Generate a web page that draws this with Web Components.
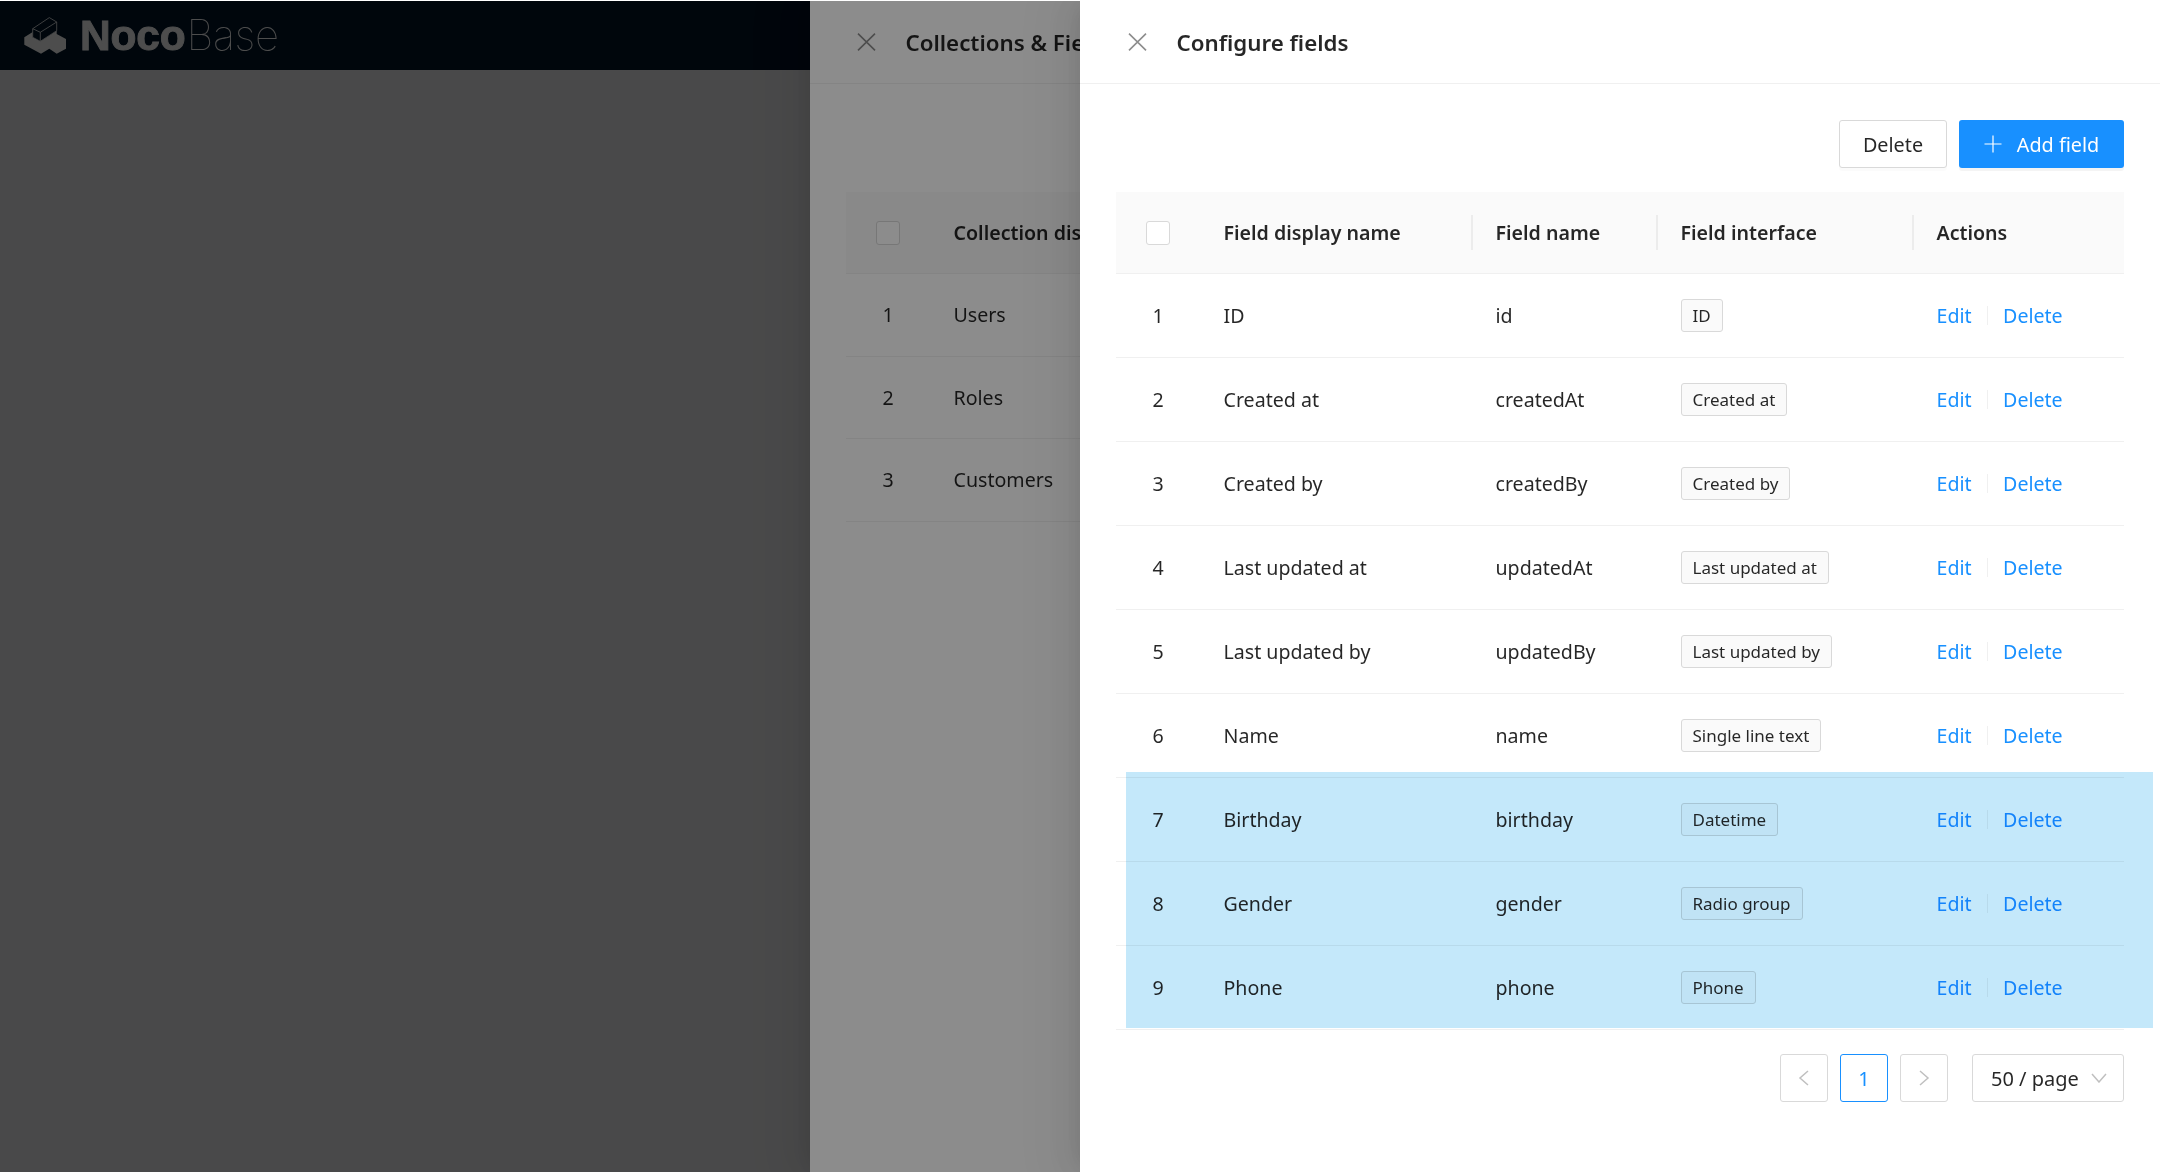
<!DOCTYPE html>
<html lang="en"><head><meta charset="utf-8"><title>NocoBase</title>
<style>
html,body{margin:0;height:100%;overflow:hidden}
body{font-family:"Noto Sans","Open Sans",sans-serif;font-size:19.6px;color:rgba(0,0,0,.85);background:#f5f5f6}
</style></head><body>
<nb-app>
  <nb-topbar slot="top"></nb-topbar>
  <nb-drawer slot="d1" class="mid" heading="Collections &amp; Fields">
    <nb-table kind="collections"></nb-table>
  </nb-drawer>
  <nb-drawer slot="d2" class="front" heading="Configure fields">
    <nb-toolbar></nb-toolbar>
    <nb-table kind="fields"></nb-table>
    <nb-pagination></nb-pagination>
  </nb-drawer>
</nb-app>
<script>
const X_ICON='<svg viewBox="0 0 19 18" width="19" height="18" fill="none" stroke="currentColor" stroke-width="1.6"><path d="M1 .6 18 17.4M18 .6 1 17.4"/></svg>';
class NbApp extends HTMLElement{constructor(){super();this.attachShadow({mode:'open'}).innerHTML=`<style>
:host{display:block;position:relative;width:2160px;height:1172px;overflow:hidden;background:#f5f5f6;border-top:1px solid #fff;box-sizing:border-box}
.mask{position:absolute;inset:0;background:rgba(0,0,0,.45)}
.d{position:absolute;top:0;bottom:0}
.d1{left:810px;right:0}.d2{left:1080px;right:0}
.line{position:absolute;left:0;right:0;top:-1px;height:1px;background:#c8c8c8}
</style><slot name="top"></slot><div class="mask"></div><div class="d d1"><slot name="d1"></slot></div><div class="mask"></div><div class="d d2"><slot name="d2"></slot></div><div class="line"></div>`}}
class NbTopbar extends HTMLElement{constructor(){super();this.attachShadow({mode:'open'}).innerHTML=`<style>
:host{display:flex;align-items:center;height:69px;background:#001529;padding-left:23px;gap:13px;color:#fff}
.t{display:flex;align-items:baseline;font-family:"Liberation Sans",sans-serif;font-size:42.5px;line-height:1}
b{font-weight:700;-webkit-text-stroke:.9px #fff;letter-spacing:-.2px}
span{font-family:Inter,"Liberation Sans",sans-serif;font-weight:100;font-size:42px;margin-left:1px;letter-spacing:-.4px}
svg{display:block}
</style><svg width="44" height="38" viewBox="0 0 44 38"><path fill="#fff" d="M1.3 20.3 9.7 15V20.3L17.3 24.3 33.7 13.7V17L43 22V31.7L33.7 36.7 26.3 31.7 18 36.7 1.3 27.7Z"/><path fill="#001529" stroke="#fff" stroke-width=".8" stroke-linejoin="round" d="M9.7 11.7 26.3.6 33.7 5V13.7L17.3 24.3 9.7 20.3Z"/><path fill="none" stroke="#fff" stroke-width=".8" d="M9.7 11.7 17.3 15.3 33.7 5M17.3 15.3V24.3"/></svg><div class="t"><b>Noco</b><span>Base</span></div>`}}
class NbDrawer extends HTMLElement{constructor(){super();this.attachShadow({mode:'open'}).innerHTML=`<style>
:host{display:flex;flex-direction:column;height:100%;background:#fff;box-shadow:-6px 0 16px -8px rgba(0,0,0,.08),-9px 0 28px rgba(0,0,0,.05),-12px 0 48px 16px rgba(0,0,0,.03)}
header{display:flex;align-items:center;height:83px;box-sizing:border-box;border-bottom:1px solid #f0f0f0;padding-left:var(--hp,48px);gap:29.5px;flex:none}
.x{display:flex;color:rgba(0,0,0,.45)}
h1{margin:0;padding-top:1px;font-size:22.3px;font-weight:600;line-height:30px;white-space:nowrap}
main{padding:36px var(--bp,36px) 0;display:flex;flex-direction:column}
</style><header><span class="x">${X_ICON}</span><h1></h1></header><main><slot></slot></main>`}
connectedCallback(){this.shadowRoot.querySelector('h1').textContent=this.getAttribute('heading');
 if(this.classList.contains('mid')){this.style.setProperty('--hp','47px');this.shadowRoot.querySelector('main').style.paddingTop='108px';}}}
class NbToolbar extends HTMLElement{constructor(){super();this.attachShadow({mode:'open'}).innerHTML=`<style>
:host{display:flex;justify-content:flex-end;gap:12px;height:48px;margin-bottom:24px}
button{font:inherit;font-size:19.8px;height:48px;border-radius:3px;box-sizing:border-box;display:flex;align-items:center;justify-content:center;padding:0;cursor:pointer}
.d{width:108px;background:#fff;border:1.5px solid #d9d9d9;color:rgba(0,0,0,.85);box-shadow:0 3px 0 rgba(0,0,0,.015)}
.p{width:165px;background:#1890ff;border:0;color:#fff;gap:15px;box-shadow:0 3px 0 rgba(0,0,0,.045)}
</style><button class="d">Delete</button><button class="p"><svg width="18" height="18" viewBox="0 0 18 18" stroke="#fff" stroke-width="1.2"><path d="M9 .5V17.5M.5 9H17.5"/></svg>Add field</button>`}}
class NbTag extends HTMLElement{constructor(){super();this.attachShadow({mode:'open'}).innerHTML=`<style>
:host{display:inline-flex;align-items:center;height:33px;box-sizing:border-box;padding:0 11px;border:1.5px solid #d9d9d9;border-radius:3px;background:#fafafa;font-size:17px;line-height:1;white-space:nowrap}
</style><slot></slot>`}}
class NbTable extends HTMLElement{constructor(){super();this.attachShadow({mode:'open'})}
connectedCallback(){const k=this.getAttribute('kind');
 const css=`<style>
:host{display:block;position:relative}
.r{display:grid;grid-template-columns:var(--c);height:84px;box-sizing:border-box;border-bottom:1.5px solid #f0f0f0;align-items:center;white-space:nowrap}
.r.m{height:82.5px}
.r.h{height:82px;background:#fafafa;font-weight:600;position:relative}
.c{padding-left:23.5px;position:relative;min-width:0}
.n{padding-left:0;text-align:center}
.h .c.s::before{content:"";position:absolute;left:-1px;top:-4px;height:35px;width:1.5px;background:#ececec}
.cb{display:block;width:24px;height:24px;margin:auto;box-sizing:border-box;border:1.5px solid #d9d9d9;border-radius:3px;background:#fff}
.a{display:flex;align-items:center;color:#1890ff}
.a i{display:block;width:1.5px;height:19px;background:#f0f0f0;margin:0 15px}
.hl{position:absolute;left:10px;width:1027px;top:580px;height:256px;background:#c4e8fa;mix-blend-mode:multiply;pointer-events:none}
</style>`;
 let rows='';
 if(k==='fields'){
  this.style.setProperty('--c','84px 272px 185px 256px 211px');
  const d=[['ID','id','ID'],['Created at','createdAt','Created at'],['Created by','createdBy','Created by'],['Last updated at','updatedAt','Last updated at'],['Last updated by','updatedBy','Last updated by'],['Name','name','Single line text'],['Birthday','birthday','Datetime'],['Gender','gender','Radio group'],['Phone','phone','Phone']];
  rows=`<div class="r h"><div class="n"><span class="cb"></span></div><div class="c">Field display name</div><div class="c s">Field name</div><div class="c s">Field interface</div><div class="c s">Actions</div></div>`+
  d.map((x,i)=>`<div class="r"><div class="n">${i+1}</div><div class="c">${x[0]}</div><div class="c">${x[1]}</div><div class="c"><nb-tag>${x[2]}</nb-tag></div><div class="c a">Edit<i></i>Delete</div></div>`).join('')+`<div class="hl"></div>`;
 }else{
  this.style.setProperty('--c','84px 400px');
  rows=`<div class="r h"><div class="n"><span class="cb"></span></div><div class="c">Collection display name</div></div>`+
  ['Users','Roles','Customers'].map((x,i)=>`<div class="r m"><div class="n">${i+1}</div><div class="c">${x}</div></div>`).join('');
 }
 this.shadowRoot.innerHTML=css+rows;}}
class NbPagination extends HTMLElement{constructor(){super();this.attachShadow({mode:'open'}).innerHTML=`<style>
:host{display:flex;justify-content:flex-end;gap:12px;margin-top:24px;height:48px;font-size:20px}
div{box-sizing:border-box;height:48px;width:48px;border:1.5px solid #d9d9d9;border-radius:3px;display:flex;align-items:center;justify-content:center;color:rgba(0,0,0,.25);background:#fff}
.on{border-color:#1890ff;color:#1890ff}
.sel{width:152px;margin-left:12px;color:rgba(0,0,0,.85);justify-content:flex-start;padding-left:18px;gap:12px}
svg{display:block}
</style><div><svg width="12" height="18" viewBox="0 0 12 18" fill="none" stroke="currentColor" stroke-width="1.5"><path d="M10 2 2 9 10 16"/></svg></div><div class="on">1</div><div><svg width="12" height="18" viewBox="0 0 12 18" fill="none" stroke="currentColor" stroke-width="1.5"><path d="M2 2 10 9 2 16"/></svg></div><div class="sel">50 / page<svg width="16" height="10" viewBox="0 0 16 10" fill="none" stroke="rgba(0,0,0,.25)" stroke-width="1.5"><path d="M1 1 8 9 15 1"/></svg></div>`}}
customElements.define('nb-app',NbApp);customElements.define('nb-topbar',NbTopbar);customElements.define('nb-drawer',NbDrawer);customElements.define('nb-toolbar',NbToolbar);customElements.define('nb-tag',NbTag);customElements.define('nb-table',NbTable);customElements.define('nb-pagination',NbPagination);
</script></body></html>
